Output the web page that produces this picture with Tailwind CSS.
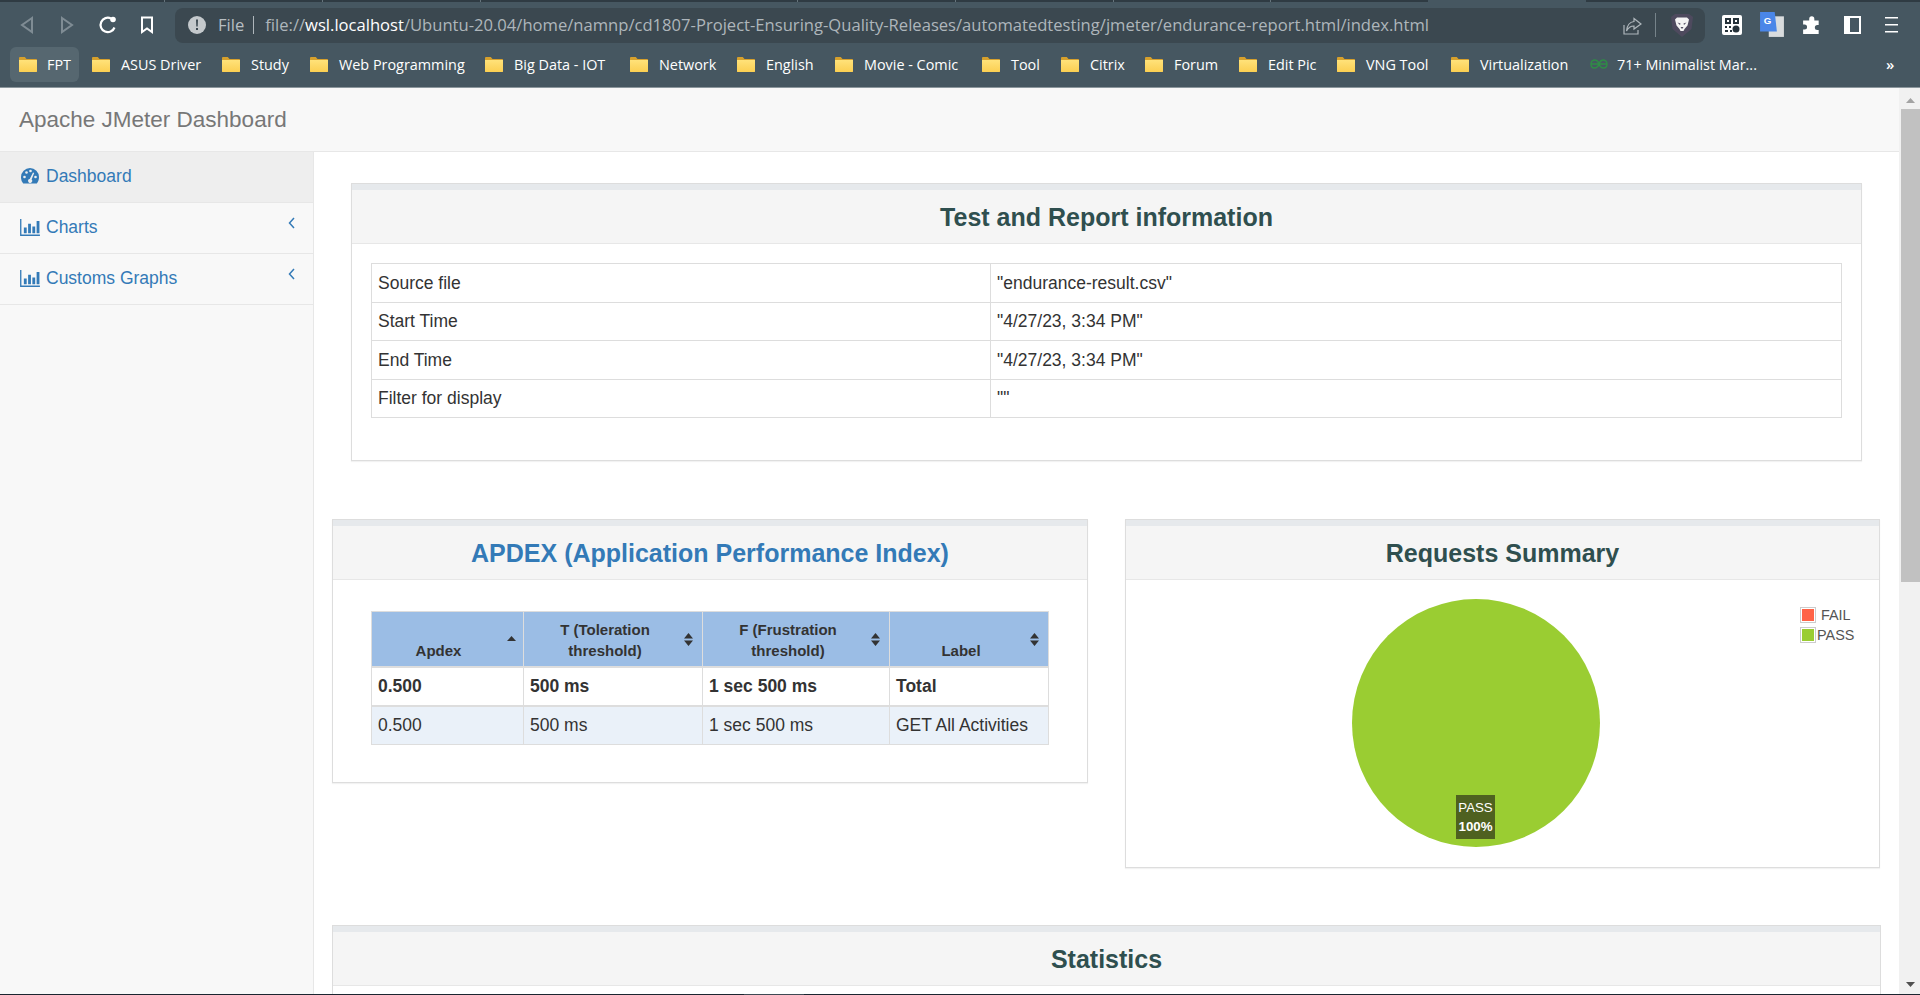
<!DOCTYPE html>
<html lang="en">
<head>
    <meta charset="UTF-8">
    <title>Apache JMeter Dashboard</title>
    <script src="https://cdn.jsdelivr.net/npm/@tailwindcss/browser@4"></script>
</head>
<body class="h-[995px] overflow-hidden flex flex-col bg-white font-['Liberation_Sans',Arial,sans-serif] text-[#333] text-[17.5px]">
    <!-- shared icons -->
    <svg class="absolute w-0 h-0">
        <defs>
            <linearGradient id="folderFill" x1="0" y1="0" x2="0" y2="1">
                <stop offset="0" stop-color="#ffe27a"/>
                <stop offset="1" stop-color="#fbcf52"/>
            </linearGradient>
        </defs>
        <symbol id="folder" viewBox="0 0 18 15">
            <path d="M0 1.2C0 .5.5 0 1.2 0h4.600l1.700 2H17c.6 0 1 .4 1 1v11c0 .6-.4 1-1 1H1c-.6 0-1-.4-1-1z" fill="#d6a02c"/>
            <path d="M0 3h18v11c0 .6-.4 1-1 1H1c-.6 0-1-.4-1-1z" fill="url(#folderFill)"/>
        </symbol>
        <symbol id="bars" viewBox="0 0 21 18">
            <path d="M0 0h1.400v16.400H21V18H0z"/>
            <path d="M4 9h3v6H4zM8.500 5h3v10h-3zM13 8h3v7h-3zM17.500 2h3v13h-3z"/>
        </symbol>
    </svg>

    <!-- browser chrome -->
    <header class="h-[88px] shrink-0 bg-[#465761] border-b border-[#8c979d] flex flex-col font-['Open_Sans',sans-serif]">
        <div class="h-[2px] flex">
            <div class="w-[1428px] flex bg-[#2f3b43]">
                <div class="w-[165px] border-r border-[#66747c]"></div>
                <div class="w-[158px] border-r border-[#66747c]"></div>
                <div class="w-[158px] border-r border-[#66747c]"></div>
                <div class="w-[317px] border-r border-[#66747c]"></div>
                <div class="w-[158px] border-r border-[#66747c]"></div>
                <div class="w-[158px] border-r border-[#66747c]"></div>
                <div class="w-[157px] border-r border-[#66747c]"></div>
            </div>
            <div class="w-[158px]"></div>
            <div class="flex-1 bg-[#2f3b43]"></div>
        </div>
        <div class="h-[45px] flex items-center pt-[1px]">
            <div class="w-[175px] flex items-center">
                <svg class="ml-[20px] w-[14px] h-[18px]" viewBox="0 0 14 18" fill="none" stroke="#7f8c94" stroke-width="2"><path d="M12 2 2 9l10 7z"/></svg>
                <svg class="ml-[26px] w-[14px] h-[18px]" viewBox="0 0 14 18" fill="none" stroke="#7f8c94" stroke-width="2"><path d="m2 2 10 7-10 7z"/></svg>
                <svg class="ml-[24px] w-[20px] h-[20px]" viewBox="0 0 20 20" fill="none"><path d="M16.500 12.500A7.200 7.200 0 1 1 13 3.500" stroke="#fff" stroke-width="2.200"/><circle cx="15" cy="4.500" r="2.800" fill="#fff"/></svg>
                <svg class="ml-[22px] w-[14px] h-[18px]" viewBox="0 0 14 18" fill="none" stroke="#fff" stroke-width="2"><path d="M2 1.500h10v14.500l-5-3.500-5 3.500z"/></svg>
            </div>
            <div class="w-[1530px] h-[35px] rounded-lg bg-[#3b4850] flex items-center text-[16.6px] whitespace-nowrap text-[#aeb6bb]">
                <svg class="ml-[13px] w-[18px] h-[18px] shrink-0" viewBox="0 0 18 18"><circle cx="9" cy="9" r="9" fill="#c4c9cc"/><path d="M8 3.500h2l-.3 7H8.300zM8 12h2v2H8z" fill="#3b4850"/></svg>
                <span class="ml-[12px] text-[#b7bec2]">File</span>
                <span class="ml-[9px] w-[1px] h-[18px] shrink-0 bg-[#aeb6bb]"></span>
                <span class="ml-[11px] flex-1 min-w-0">file://<span class="text-white">wsl.localhost</span>/Ubuntu-20.04/home/namnp/cd1807-Project-Ensuring-Quality-Releases/automatedtesting/jmeter/endurance-report.html/index.html</span>
                <svg class="w-[19px] h-[19px] shrink-0" viewBox="0 0 19 19" fill="none" stroke="#aeb6bb" stroke-width="1.200"><path d="M1 9v9h14v-4"/><path d="M11 2.500 18 8l-7 5V10C7 10 5 12 3.500 15 4 10 6.500 6 11 5.500z"/></svg>
                <span class="ml-[13px] w-[1px] h-[24px] shrink-0 bg-[#76838a]"></span>
                <svg class="ml-[15px] mr-[12px] w-[22px] h-[24px] shrink-0" viewBox="0 0 22 24"><path d="M4 1h14l4 3-1.500 12L11 24 1.500 16 0 4z" fill="#4e4a5e"/><path d="M6 4.500h10l2 2-1.500 6-3 3.500-1 2h-3l-1-2-3-3.500L4 6.500z" fill="#f4f4f4"/><path d="M6.500 9.500 9.500 10.500 9 12zM15.500 9.500 12.500 10.500 13 12zM9.500 14h3L11 16z" fill="#4e4a5e"/></svg>
            </div>
            <div class="flex-1 flex items-center">
                <svg class="ml-[17px] w-[20px] h-[20px]" viewBox="0 0 20 20"><rect width="20" height="20" rx="2" fill="#fff"/><path d="M3 3h6v6H3zM11 3h6v6h-6zM3 11h2v2H3zM7 11h2v2H7zM3 15h3v2H3zM8 15h2v2H8z" fill="#26323a"/><path d="M5 5h2v2H5zM13 5h2v2h-2z" fill="#fff"/><circle cx="14" cy="14" r="3.500" fill="#26323a"/></svg>
                <svg class="ml-[18px] w-[24px] h-[26px]" viewBox="0 0 22 24"><rect x="8" y="4" width="14" height="19" fill="#d9dcde"/><path d="M0 0h13.500l2 18H0z" fill="#4a86e8"/><text x="3.500" y="11.500" font-size="9" font-weight="700" fill="#fff" font-family="Liberation Sans">G</text></svg>
                <svg class="ml-[18px] w-[20px] h-[20px]" viewBox="0 0 18 18" fill="#fff"><path d="M6.500 3.500a2.300 2.300 0 1 1 4.600 0V5H15v4h-1.200a2.200 2.200 0 1 0 0 4.500H15V17H1v-4h1.300a2.200 2.200 0 1 0 0-4.500H1V5h5.500z"/></svg>
                <svg class="ml-[22px] w-[17px] h-[18px]" viewBox="0 0 17 18"><path d="M0 0h17v18H0z" fill="#fff"/><path d="M6 2h9v14H6z" fill="#465761"/></svg>
                <svg class="ml-[24px] w-[13px] h-[16px]" viewBox="0 0 13 16" fill="#fff"><path d="M0 0h13v1.500H0zM0 7h13v1.500H0zM0 14h13v1.500H0z"/></svg>
            </div>
        </div>
        <nav class="h-[35px] pl-[10px] flex items-center gap-[4px] text-[14.4px] text-white whitespace-nowrap">
            <a class="w-[69px] h-[35px] rounded-md bg-[#566770] flex items-center pl-[9px] gap-[10px]"><svg class="w-[18px] h-[15px]"><use href="#folder"/></svg>FPT</a>
            <a class="w-[126px] flex items-center pl-[9px] gap-[11px]"><svg class="w-[18px] h-[15px]"><use href="#folder"/></svg>ASUS Driver</a>
            <a class="w-[84px] flex items-center pl-[9px] gap-[11px]"><svg class="w-[18px] h-[15px]"><use href="#folder"/></svg>Study</a>
            <a class="w-[171px] flex items-center pl-[9px] gap-[11px]"><svg class="w-[18px] h-[15px]"><use href="#folder"/></svg>Web Programming</a>
            <a class="w-[141px] flex items-center pl-[9px] gap-[11px]"><svg class="w-[18px] h-[15px]"><use href="#folder"/></svg>Big Data - IOT</a>
            <a class="w-[103px] flex items-center pl-[9px] gap-[11px]"><svg class="w-[18px] h-[15px]"><use href="#folder"/></svg>Network</a>
            <a class="w-[94px] flex items-center pl-[9px] gap-[11px]"><svg class="w-[18px] h-[15px]"><use href="#folder"/></svg>English</a>
            <a class="w-[143px] flex items-center pl-[9px] gap-[11px]"><svg class="w-[18px] h-[15px]"><use href="#folder"/></svg>Movie - Comic</a>
            <a class="w-[75px] flex items-center pl-[9px] gap-[11px]"><svg class="w-[18px] h-[15px]"><use href="#folder"/></svg>Tool</a>
            <a class="w-[80px] flex items-center pl-[9px] gap-[11px]"><svg class="w-[18px] h-[15px]"><use href="#folder"/></svg>Citrix</a>
            <a class="w-[90px] flex items-center pl-[9px] gap-[11px]"><svg class="w-[18px] h-[15px]"><use href="#folder"/></svg>Forum</a>
            <a class="w-[94px] flex items-center pl-[9px] gap-[11px]"><svg class="w-[18px] h-[15px]"><use href="#folder"/></svg>Edit Pic</a>
            <a class="w-[110px] flex items-center pl-[9px] gap-[11px]"><svg class="w-[18px] h-[15px]"><use href="#folder"/></svg>VNG Tool</a>
            <a class="w-[135px] flex items-center pl-[9px] gap-[11px]"><svg class="w-[18px] h-[15px]"><use href="#folder"/></svg>Virtualization</a>
            <a class="w-[180px] flex items-center pl-[9px] gap-[9px]"><svg class="w-[18px] h-[10px]" viewBox="0 0 18 10" fill="none" stroke="#2f8d46" stroke-width="1.400"><path d="M1 5h16M9 5C8 1.500 6 1 4.500 1S1 2.500 1 5s1.500 4 3.500 4S8 8 9 5c1-3 3-4 4.500-4S17 2.500 17 5s-1.500 4-3.500 4S10 8 9 5z"/></svg>71+ Minimalist Mar...</a>
            <span class="ml-[121px] text-[15px] font-semibold">»</span>
        </nav>
    </header>

    <div class="flex-1 min-h-0 flex">
        <div class="flex-1 min-w-0 flex flex-col">
            <div class="h-[64px] shrink-0 bg-[#f8f8f8] border-b border-[#e7e7e7] flex items-center pl-[19px] text-[22.5px] text-[#777]">Apache JMeter Dashboard</div>
            <div class="flex-1 min-h-0 flex">
                <!-- sidebar -->
                <aside class="w-[314px] shrink-0 bg-[#f8f8f8] border-r border-[#e7e7e7] text-[#337ab7]">
                    <a class="h-[51px] pb-[2px] flex items-center bg-[#eeeeee] border-b border-[#e7e7e7]">
                        <svg class="ml-[21px] w-[18px] h-[16px]" viewBox="0 0 18 16"><path d="M9 0a9 9 0 0 1 9 9c0 2.500-.7 4.800-2.200 6.500H2.200A9.500 9.500 0 0 1 0 9a9 9 0 0 1 9-9z" fill="#337ab7"/><circle cx="3.500" cy="9" r="1.300" fill="#eee"/><circle cx="5.500" cy="4.500" r="1.300" fill="#eee"/><circle cx="9.500" cy="3" r="1.300" fill="#eee"/><circle cx="14.500" cy="9" r="1.300" fill="#eee"/><path d="m12 4.500 1.200.6-2.600 6.500a2 2 0 1 1-1.900-.6z" fill="#eee"/></svg>
                        <span class="ml-[7px]">Dashboard</span>
                    </a>
                    <a class="h-[51px] pb-[2px] flex items-center border-b border-[#e7e7e7]">
                        <svg class="ml-[20px] w-[20px] h-[17px] fill-[#337ab7]"><use href="#bars"/></svg>
                        <span class="ml-[6px]">Charts</span>
                        <svg class="ml-auto mr-[18px] mb-[8px] w-[7px] h-[12px]" viewBox="0 0 7 12" fill="none" stroke="#337ab7" stroke-width="1.500"><path d="M6 1 1.500 6 6 11"/></svg>
                    </a>
                    <a class="h-[51px] pb-[2px] flex items-center border-b border-[#e7e7e7]">
                        <svg class="ml-[20px] w-[20px] h-[17px] fill-[#337ab7]"><use href="#bars"/></svg>
                        <span class="ml-[6px]">Customs Graphs</span>
                        <svg class="ml-auto mr-[18px] mb-[8px] w-[7px] h-[12px]" viewBox="0 0 7 12" fill="none" stroke="#337ab7" stroke-width="1.500"><path d="M6 1 1.500 6 6 11"/></svg>
                    </a>
                </aside>

                <main class="flex-1 min-w-0 overflow-hidden px-[18px] pt-[31px]">
                    <!-- test and report information -->
                    <section class="mx-[19px] h-[278px] border border-[#dddddd] shadow-[0_1px_1px_rgba(0,0,0,0.05)]">
                        <div class="h-[6px] bg-[#e6e9ec]"></div>
                        <h3 class="h-[54px] pt-[3px] bg-[#f5f5f5] border-b border-[#e7e7e7] flex items-center justify-center text-[25px] font-bold text-[#2f4f4f]">Test and Report information</h3>
                        <div class="px-[19px] pt-[19px]">
                            <table class="w-full table-fixed border-collapse">
                                <colgroup><col class="w-[619px]"><col></colgroup>
                                <tr>
                                    <td class="h-[38.5px] px-[6px] border border-[#dddddd]">Source file</td>
                                    <td class="px-[6px] border border-[#dddddd]">"endurance-result.csv"</td>
                                </tr>
                                <tr>
                                    <td class="h-[38.5px] px-[6px] border border-[#dddddd]">Start Time</td>
                                    <td class="px-[6px] border border-[#dddddd]">"4/27/23, 3:34 PM"</td>
                                </tr>
                                <tr>
                                    <td class="h-[38.5px] px-[6px] border border-[#dddddd]">End Time</td>
                                    <td class="px-[6px] border border-[#dddddd]">"4/27/23, 3:34 PM"</td>
                                </tr>
                                <tr>
                                    <td class="h-[38.5px] px-[6px] border border-[#dddddd]">Filter for display</td>
                                    <td class="px-[6px] border border-[#dddddd]">""</td>
                                </tr>
                            </table>
                        </div>
                    </section>

                    <div class="mt-[58px] flex items-start gap-[37px]">
                        <!-- apdex -->
                        <section class="w-[756px] h-[264px] border border-[#dddddd] shadow-[0_1px_1px_rgba(0,0,0,0.05)]">
                            <div class="h-[6px] bg-[#e6e9ec]"></div>
                            <h3 class="h-[54px] pt-[3px] bg-[#f5f5f5] border-b border-[#e7e7e7] flex items-center justify-center text-[25px] font-bold text-[#337ab7]">APDEX (Application Performance Index)</h3>
                            <div class="pl-[38px] pt-[31px]">
                                <table class="w-[678px] table-fixed border-collapse">
                                    <colgroup><col class="w-[152px]"><col class="w-[179px]"><col class="w-[187px]"><col></colgroup>
                                    <thead class="bg-[#9bbde5] text-[15px] leading-[21px] font-bold">
                                        <tr>
                                            <th class="relative h-[55px] pl-[6px] pr-[24px] pb-[5px] align-bottom text-center border border-[#dddddd] border-b-2">Apdex
                                                <svg class="absolute right-[7px] top-[24px] w-[9px] h-[5px]" viewBox="0 0 9 5" fill="#333"><path d="M0 5 4.500 0 9 5z"/></svg>
                                            </th>
                                            <th class="relative pl-[6px] pr-[22px] pb-[5px] align-bottom text-center border border-[#dddddd] border-b-2">T (Toleration threshold)
                                                <svg class="absolute right-[9px] top-[21px] w-[9px] h-[13px]" viewBox="0 0 9 13" fill="#333"><path d="M0 5.500 4.500 0 9 5.500zM0 7.500h9L4.500 13z"/></svg>
                                            </th>
                                            <th class="relative pl-[6px] pr-[22px] pb-[5px] align-bottom text-center border border-[#dddddd] border-b-2">F (Frustration threshold)
                                                <svg class="absolute right-[9px] top-[21px] w-[9px] h-[13px]" viewBox="0 0 9 13" fill="#333"><path d="M0 5.500 4.500 0 9 5.500zM0 7.500h9L4.500 13z"/></svg>
                                            </th>
                                            <th class="relative pl-[6px] pr-[22px] pb-[5px] align-bottom text-center border border-[#dddddd] border-b-2">Label
                                                <svg class="absolute right-[9px] top-[21px] w-[9px] h-[13px]" viewBox="0 0 9 13" fill="#333"><path d="M0 5.500 4.500 0 9 5.500zM0 7.500h9L4.500 13z"/></svg>
                                            </th>
                                        </tr>
                                    </thead>
                                    <tbody>
                                        <tr class="font-bold">
                                            <td class="h-[39px] px-[6px] border border-[#dddddd] border-b-2">0.500</td>
                                            <td class="px-[6px] border border-[#dddddd] border-b-2">500 ms</td>
                                            <td class="px-[6px] border border-[#dddddd] border-b-2">1 sec 500 ms</td>
                                            <td class="px-[6px] border border-[#dddddd] border-b-2">Total</td>
                                        </tr>
                                        <tr class="bg-[#eaf1f9]">
                                            <td class="h-[39px] px-[6px] border border-[#dddddd]">0.500</td>
                                            <td class="px-[6px] border border-[#dddddd]">500 ms</td>
                                            <td class="px-[6px] border border-[#dddddd]">1 sec 500 ms</td>
                                            <td class="px-[6px] border border-[#dddddd] whitespace-nowrap">GET All Activities</td>
                                        </tr>
                                    </tbody>
                                </table>
                            </div>
                        </section>

                        <!-- requests summary -->
                        <section class="w-[755px] h-[349px] border border-[#dddddd] shadow-[0_1px_1px_rgba(0,0,0,0.05)]">
                            <div class="h-[6px] bg-[#e6e9ec]"></div>
                            <h3 class="h-[54px] pt-[3px] bg-[#f5f5f5] border-b border-[#e7e7e7] flex items-center justify-center text-[25px] font-bold text-[#2f4f4f]">Requests Summary</h3>
                            <div class="flex pl-[226px] pt-[19px]">
                                <div class="relative w-[248px] h-[248px] rounded-full bg-[#9acd32]">
                                    <div class="absolute left-[104px] top-[196px] w-[39px] h-[44px] bg-[#4f6120] flex flex-col items-center justify-center text-[13.3px] leading-[19px] text-white">
                                        <span>PASS</span>
                                        <span class="font-bold">100%</span>
                                    </div>
                                </div>
                                <div class="ml-[200px] mt-[8px] flex flex-col gap-[4px] text-[14.4px] text-[#545454] leading-[16px]">
                                    <div class="flex">
                                        <span class="w-[16px] h-[16px] border border-[#cccccc] p-[1px]"><span class="block w-full h-full bg-[#ff6347]"></span></span>
                                        <span class="ml-[5px]">FAIL</span>
                                    </div>
                                    <div class="flex">
                                        <span class="w-[16px] h-[16px] border border-[#cccccc] p-[1px]"><span class="block w-full h-full bg-[#9acd32]"></span></span>
                                        <span class="ml-[1px]">PASS</span>
                                    </div>
                                </div>
                            </div>
                        </section>
                    </div>

                    <!-- statistics -->
                    <section class="mt-[57px] border border-[#dddddd]">
                        <div class="h-[6px] bg-[#e6e9ec]"></div>
                        <h3 class="h-[54px] pt-[3px] bg-[#f5f5f5] border-b border-[#e7e7e7] flex items-center justify-center text-[25px] font-bold text-[#2f4f4f]">Statistics</h3>
                        <div class="h-[200px]"></div>
                    </section>
                </main>
            </div>
        </div>

        <!-- scrollbar -->
        <div class="w-[21px] shrink-0 bg-[#f1f1f1] flex flex-col items-end">
            <div class="w-[20px] h-[21px] flex items-center justify-center pt-[3px]"><svg class="w-[9px] h-[5px]" viewBox="0 0 9 5" fill="#a3a3a3"><path d="M0 5 4.500 0 9 5z"/></svg></div>
            <div class="w-[19px] h-[473px] bg-[#c1c1c1]"></div>
            <div class="flex-1"></div>
            <div class="w-[20px] h-[20px] flex items-center justify-center"><svg class="w-[9px] h-[5px]" viewBox="0 0 9 5" fill="#505050"><path d="M0 0h9L4.500 5z"/></svg></div>
        </div>
    </div>

    <!-- taskbar edge -->
    <div class="h-[1px] shrink-0 bg-[#1b2530] flex">
        <div class="ml-[744px] w-[60px] bg-[#3f4a54]"></div>
    </div>
</body>
</html>
